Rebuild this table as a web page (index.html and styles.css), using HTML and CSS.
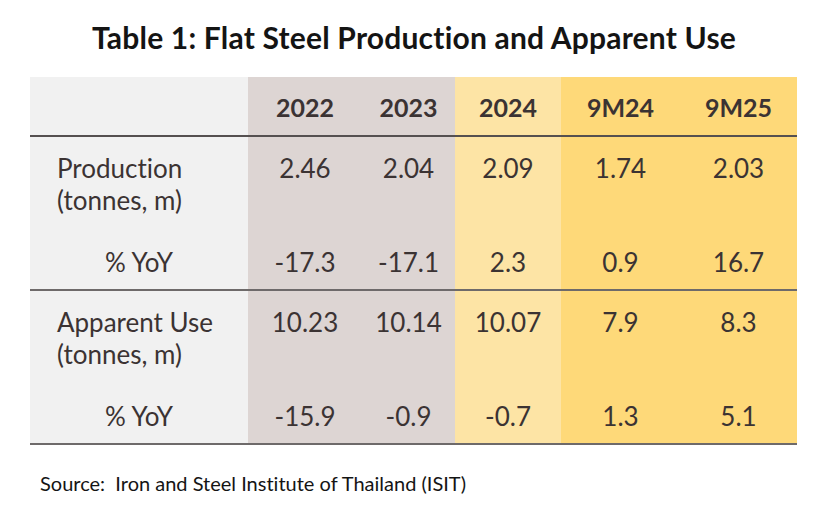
FILE: index.html
```html
<!DOCTYPE html>
<html lang="en">
<head>
<meta charset="utf-8">
<title>Table 1: Flat Steel Production and Apparent Use</title>
<link rel="stylesheet" href="styles.css">
</head>
<body>
<div class="page">
  <h1 class="title">Table 1: Flat Steel Production and Apparent Use</h1>
  <div class="table">
    <div class="row head">
      <div class="cell label c-label"></div>
      <div class="cell c-grey w-2022">2022</div>
      <div class="cell c-grey w-2023">2023</div>
      <div class="cell c-light w-2024">2024</div>
      <div class="cell c-yellow w-9m24">9M24</div>
      <div class="cell c-yellow w-9m25">9M25</div>
    </div>
    <div class="row main">
      <div class="cell label c-label">Production<br>(tonnes, m)</div>
      <div class="cell c-grey w-2022">2.46</div>
      <div class="cell c-grey w-2023">2.04</div>
      <div class="cell c-light w-2024">2.09</div>
      <div class="cell c-yellow w-9m24">1.74</div>
      <div class="cell c-yellow w-9m25">2.03</div>
    </div>
    <div class="row yoy sep">
      <div class="cell label pct c-label">% YoY</div>
      <div class="cell c-grey w-2022">-17.3</div>
      <div class="cell c-grey w-2023">-17.1</div>
      <div class="cell c-light w-2024">2.3</div>
      <div class="cell c-yellow w-9m24">0.9</div>
      <div class="cell c-yellow w-9m25">16.7</div>
    </div>
    <div class="row main">
      <div class="cell label c-label">Apparent Use<br>(tonnes, m)</div>
      <div class="cell c-grey w-2022">10.23</div>
      <div class="cell c-grey w-2023">10.14</div>
      <div class="cell c-light w-2024">10.07</div>
      <div class="cell c-yellow w-9m24">7.9</div>
      <div class="cell c-yellow w-9m25">8.3</div>
    </div>
    <div class="row yoy sep">
      <div class="cell label pct c-label">% YoY</div>
      <div class="cell c-grey w-2022">-15.9</div>
      <div class="cell c-grey w-2023">-0.9</div>
      <div class="cell c-light w-2024">-0.7</div>
      <div class="cell c-yellow w-9m24">1.3</div>
      <div class="cell c-yellow w-9m25">5.1</div>
    </div>
  </div>
  <p class="source">Source:&nbsp; Iron and Steel Institute of Thailand (ISIT)</p>
</div>
</body>
</html>
```
FILE: styles.css
```css
* { box-sizing: border-box; }
html, body { margin: 0; padding: 0; background: #ffffff; }
body {
  font-family: Lato, "Open Sans", sans-serif;
  color: #3b3333;
  font-variant-ligatures: none;
}
.page { width: 840px; height: 519px; padding-top: 20px; }
.title {
  margin: 0;
  text-align: center;
  font-size: 30px;
  line-height: 34px;
  font-weight: 700;
  color: #141414;
  letter-spacing: 0.2px;
  padding-right: 12px;
}
.table { margin: 23px 0 0 30px; width: 767px; }
.row { display: flex; }
.cell { text-align: center; font-size: 26px; line-height: 32px; }
.head .cell {
  height: 60px;
  line-height: 60px;
  font-size: 25px;
  font-weight: 700;
  border-bottom: 2px solid #555050;
}
.main .cell { height: 95px; padding-top: 15px; }
.yoy .cell { height: 59px; padding-top: 14px; }
.sep .cell { border-bottom: 2px solid #6e6a6a; }
.label { width: 218px; text-align: left; padding-left: 27px; }
.label.pct { text-align: center; padding-left: 0; }
.c-label { background: #f1f1f1; }
.c-grey { background: #ddd5d3; }
.c-light { background: #fde4a5; }
.c-yellow { background: #fed979; }
.w-2022 { width: 114px; }
.w-2023 { width: 93px; }
.w-2024 { width: 106px; }
.w-9m24 { width: 119px; }
.w-9m25 { width: 117px; }
.source {
  margin: 26px 0 0 40px;
  font-size: 20px;
  line-height: 24px;
  color: #141414;
}
```
